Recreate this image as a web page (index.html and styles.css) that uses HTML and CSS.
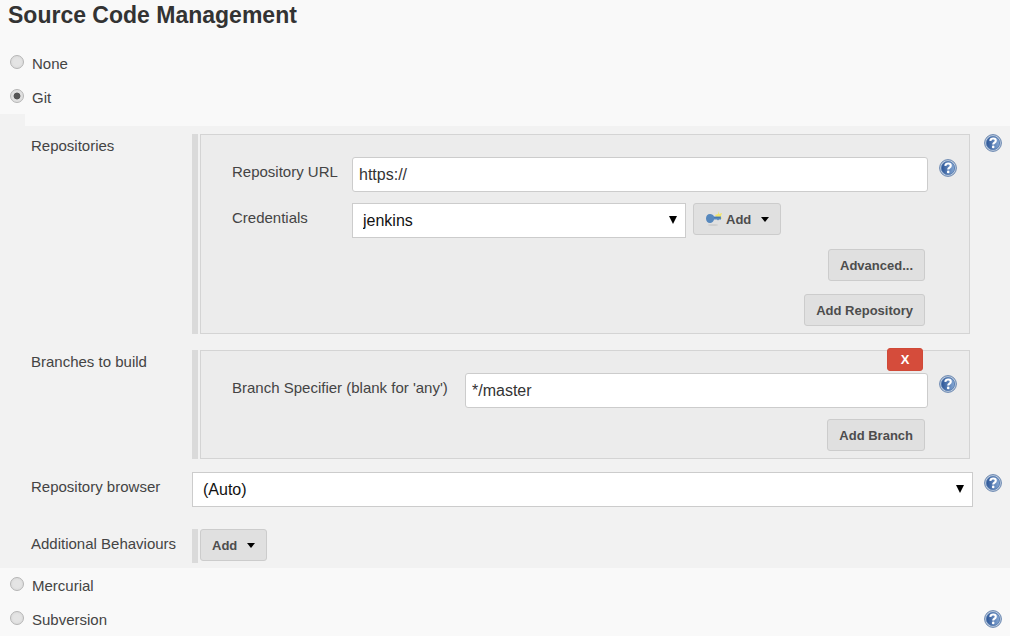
FILE: index.html
```html
<!DOCTYPE html>
<html lang="en">
<head>
    <meta charset="UTF-8">
    <title>Source Code Management</title>
    <link rel="stylesheet" href="styles.css">
</head>
<body>
    <!-- shared help icon -->
    <svg class="defs" width="0" height="0" aria-hidden="true">
        <defs>
            <linearGradient id="helpFill" x1="0" y1="0" x2="1" y2="0">
                <stop offset="0" stop-color="#2c5596"/>
                <stop offset="1" stop-color="#86a8d4"/>
            </linearGradient>
            <symbol id="help" viewBox="0 0 18 18">
                <circle cx="9" cy="9" r="8.4" fill="#bccadd" stroke="#6a87b0"/>
                <circle cx="9" cy="9" r="6.6" fill="url(#helpFill)" stroke="#4f77ae" stroke-width="0.8"/>
                <path d="M6.3 6.8C6.5 5.1 7.700 4.500 9.200 4.500C10.800 4.500 11.800 5.400 11.800 6.700C11.800 8.600 9.200 8.500 9.200 10.500" fill="none" stroke="#fff" stroke-width="2.1"/>
                <circle cx="9.2" cy="12.9" r="1.3" fill="#fff"/>
            </symbol>
        </defs>
    </svg>

    <form>
        <h1>Source Code Management</h1>

        <div class="option">
            <input type="radio" name="scm" id="none">
            <label for="none">None</label>
        </div>
        <div class="option">
            <input type="radio" name="scm" id="git" checked>
            <label for="git">Git</label>
        </div>

        <div class="panel">
            <div class="panel-top"></div>

            <div class="row">
                <div class="name">Repositories</div>
                <div class="content">
                    <div class="repeat">
                        <div class="box">
                            <div class="line">
                                <label class="field-name" for="url">Repository URL</label>
                                <input class="text" type="text" id="url" value="https://">
                                <a class="help" href="#" aria-label="Help for Repository URL"><svg><use href="#help"/></svg></a>
                            </div>
                            <div class="line">
                                <label class="field-name" for="credentials">Credentials</label>
                                <div class="select credentials">
                                    <select id="credentials">
                                        <option>jenkins</option>
                                    </select>
                                    <svg class="arrow" viewBox="0 0 8 8"><path d="M0 0H8L4 8Z"/></svg>
                                </div>
                                <button class="btn" type="button">
                                    <svg class="key" viewBox="0 0 18 16">
                                        <ellipse cx="8" cy="14" rx="5" ry="1" fill="#cfcfcf"/>
                                        <path d="M13 0L14 3L17 2L16 5L17 8L12 7L10 4L13 3Z" fill="#f3e56b"/>
                                        <path d="M5 3C7 3 8.5 4 9 5.5H16V8.5H14L13 9.5L12 8.5H9C8.5 10.5 7 12 5 12C2.5 12 1 10 1 7.5C1 5 2.5 3 5 3Z" fill="#5788bd"/>
                                        <path d="M9 6.500H15" stroke="#4a78ad"/>
                                    </svg>
                                    Add
                                    <svg class="caret" viewBox="0 0 8 5"><path d="M0 0H8L4 5Z"/></svg>
                                </button>
                            </div>
                            <div class="actions">
                                <button class="btn" type="button">Advanced...</button>
                                <button class="btn" type="button">Add Repository</button>
                            </div>
                        </div>
                    </div>
                </div>
                <a class="help" href="#" aria-label="Help for Repositories"><svg><use href="#help"/></svg></a>
            </div>

            <div class="row">
                <div class="name">Branches to build</div>
                <div class="content">
                    <div class="repeat">
                        <div class="box">
                            <button class="delete" type="button">X</button>
                            <div class="line">
                                <label class="field-name wide" for="branch">Branch Specifier (blank for 'any')</label>
                                <input class="text" type="text" id="branch" value="*/master">
                                <a class="help" href="#" aria-label="Help for Branch Specifier"><svg><use href="#help"/></svg></a>
                            </div>
                            <div class="actions">
                                <button class="btn" type="button">Add Branch</button>
                            </div>
                        </div>
                    </div>
                </div>
            </div>

            <div class="row browser">
                <label class="name" for="browser">Repository browser</label>
                <div class="content">
                    <div class="select">
                        <select id="browser">
                            <option>(Auto)</option>
                        </select>
                        <svg class="arrow" viewBox="0 0 8 8"><path d="M0 0H8L4 8Z"/></svg>
                    </div>
                </div>
                <a class="help" href="#" aria-label="Help for Repository browser"><svg><use href="#help"/></svg></a>
            </div>

            <div class="row">
                <div class="name">Additional Behaviours</div>
                <div class="content">
                    <div class="repeat">
                        <button class="btn" type="button">
                            Add
                            <svg class="caret" viewBox="0 0 8 5"><path d="M0 0H8L4 5Z"/></svg>
                        </button>
                    </div>
                </div>
            </div>
        </div>

        <div class="option">
            <input type="radio" name="scm" id="mercurial">
            <label for="mercurial">Mercurial</label>
        </div>
        <div class="option">
            <input type="radio" name="scm" id="subversion">
            <label for="subversion">Subversion</label>
            <a class="help" href="#" aria-label="Help for Subversion"><svg><use href="#help"/></svg></a>
        </div>
    </form>
</body>
</html>
```
FILE: styles.css
```css
* {
    box-sizing: border-box;
}
body {
    margin: 0;
    background: #f9f9f9;
    color: #444;
    font: 15px/20px "Liberation Sans", Arial, sans-serif;
}
input, select, button {
    font-family: inherit;
}
svg {
    display: block;
}
.defs {
    position: absolute;
}
h1 {
    margin: 0;
    padding: 0 8px 16px;
    color: #333;
    font-size: 23px;
    line-height: 30px;
}

/* radio rows */
.option {
    display: flex;
    align-items: center;
    gap: 8px;
    height: 34px;
    padding: 0 8px 0 10px;
}
.option label {
    padding-top: 2px;
}
.option .help {
    margin-left: auto;
}
input[type="radio"] {
    appearance: none;
    width: 14px;
    height: 14px;
    margin: 0 0 2px;
    border: 1px solid #b5b5b5;
    border-radius: 50%;
    background: radial-gradient(#e4e4e4 40%, #d6d6d6);
}
input[type="radio"]:checked {
    background: radial-gradient(#555 35%, #e0e0e0 45%);
}

/* git settings */
.panel {
    padding-bottom: 5px;
    background: #f2f2f2;
}
.panel-top {
    height: 12px;
    margin: 0 0 8px 25px;
    background: #f9f9f9;
}
.row {
    display: flex;
    align-items: flex-start;
    padding: 0 8px 0 31px;
    margin-bottom: 16px;
}
.row:last-child {
    margin-bottom: 0;
}
.row.browser {
    margin: -3px 0 22px;
}
.name {
    width: 161px;
    padding-top: 2px;
}
.row:nth-child(n+4) .name {
    padding-top: 5px;
}
.content {
    flex: 1;
    margin-right: 29px;
}
.row .content:not(:last-child) {
    margin-right: 11px;
}
.repeat {
    min-height: 34px;
    padding-left: 2px;
    margin-right: 3px;
    border-left: 6px solid #dadada;
}
.box {
    position: relative;
    padding: 22px 12px 7px 31px;
    border: 1px solid #d4d4d4;
    background: #ececec;
}
.line {
    display: flex;
    align-items: flex-start;
    margin-bottom: 11px;
}
.field-name {
    width: 120px;
    padding-top: 5px;
    white-space: nowrap;
}
.field-name.wide {
    width: 233px;
}
.text, select {
    height: 35px;
    border: 1px solid #ccc;
    background: #fff;
    font-size: 16px;
}
.text {
    flex: 1;
    min-width: 0;
    padding: 0 6px;
    border-radius: 3px;
    color: #333;
}
.help, .help svg {
    display: block;
    width: 18px;
    height: 18px;
}
.line .help {
    margin: 2px 0 0 11px;
}
.browser .help {
    margin-top: 2px;
}
.select {
    position: relative;
}
.credentials {
    width: 334px;
    margin-right: 7px;
}
select {
    appearance: none;
    display: block;
    width: 100%;
    padding: 0 10px;
    color: #111;
}
.arrow {
    position: absolute;
    top: 13px;
    right: 9px;
    width: 8px;
    height: 8px;
    pointer-events: none;
}
.actions {
    display: flex;
    flex-direction: column;
    align-items: flex-end;
    gap: 13px;
    padding-right: 32px;
}

/* buttons */
.btn {
    display: flex;
    align-items: center;
    height: 32px;
    padding: 0 11px;
    border: 1px solid #ccc;
    border-radius: 3px;
    background: #e0e0e0;
    color: #4d4d4d;
    font-size: 13px;
    font-weight: bold;
}
.key {
    width: 18px;
    height: 16px;
    margin-right: 3px;
}
.caret {
    width: 8px;
    height: 5px;
    margin-left: 10px;
}
.delete {
    position: absolute;
    top: -3px;
    right: 46px;
    width: 36px;
    height: 23px;
    padding: 0;
    border: 1px solid #d04937;
    border-radius: 3px;
    background: #d54c3b;
    color: #fff;
    font-size: 13px;
    font-weight: bold;
}
```
